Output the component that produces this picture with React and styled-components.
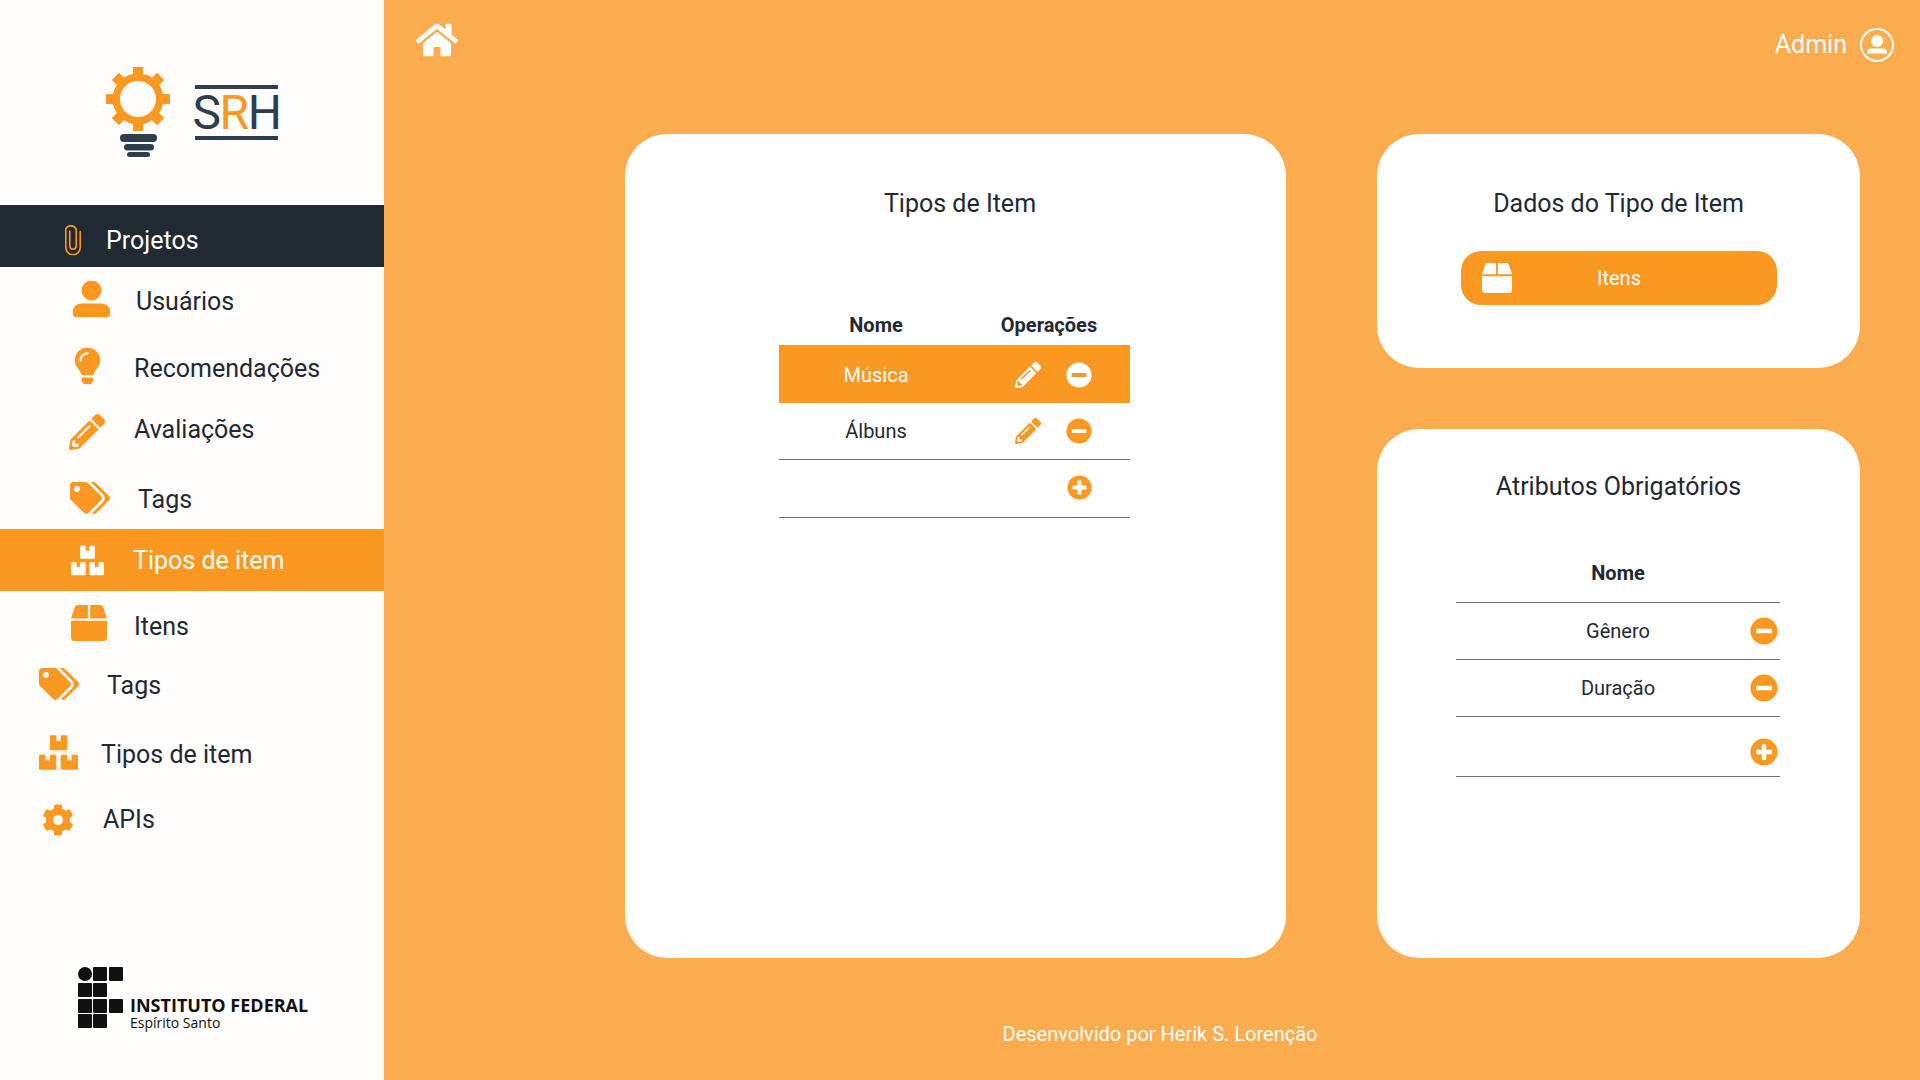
import React from "react";
import styled, { createGlobalStyle } from "styled-components";
import {
  FaBox,
  FaBoxes,
  FaCog,
  FaHome,
  FaLightbulb,
  FaMinusCircle,
  FaPencilAlt,
  FaPlusCircle,
  FaTags,
} from "react-icons/fa";

const ACCENT = "#fa9821";
const PAGE = "#fbac4e";
const DARK = "#212932";
const LOGO_DARK = "#2f3e4e";

const GlobalStyle = createGlobalStyle`
  html, body {
    margin: 0;
    padding: 0;
    height: 100%;
    overflow: hidden;
    font-family: Roboto, "Liberation Sans", sans-serif;
    color: ${DARK};
  }
  * { box-sizing: border-box; }
`;

const Page = styled.div`
  display: flex;
  width: 1920px;
  height: 1080px;
  background: ${PAGE};
`;

/* sidebar */
const Sidebar = styled.aside`
  display: flex;
  flex-direction: column;
  width: 384px;
  height: 100%;
  background: #fffdfb;
`;

const LogoArea = styled.div`
  display: flex;
  align-items: flex-start;
  height: 205px;
  padding: 67px 0 0 106px;
`;

const BulbMark = styled.svg`
  width: 64px;
  height: 90px;
  display: block;
`;

const Wordmark = styled.div`
  width: 83px;
  height: 55px;
  margin: 18px 0 0 25px;
  border-top: 4px solid ${LOGO_DARK};
  border-bottom: 4px solid ${LOGO_DARK};
  display: flex;
  align-items: center;
  justify-content: center;
  font-size: 48px;
  line-height: 47px;
  letter-spacing: -1.5px;
  color: ${LOGO_DARK};
  span {
    color: ${ACCENT};
  }
`;

const Nav = styled.nav`
  display: flex;
  flex-direction: column;
`;

const NavRow = styled.a`
  display: flex;
  align-items: center;
  height: ${(p) => p.$h}px;
  margin-top: ${(p) => p.$mt || 0}px;
  padding-left: ${(p) => p.$iconX}px;
  padding-top: ${(p) => p.$pt || 0}px;
  font-size: 25px;
  background: ${(p) =>
    p.$state === "open" ? DARK : p.$state === "active" ? ACCENT : "transparent"};
  color: ${(p) => (p.$state ? "#fff" : DARK)};
`;

const NavIcon = styled.span`
  display: flex;
  flex: none;
  width: ${(p) => p.$w}px;
  color: ${(p) => (p.$state === "active" ? "#fff" : ACCENT)};
  transform: translateY(${(p) => p.$dy || 0}px);
  svg {
    display: block;
  }
`;

const SidebarFooter = styled.div`
  display: flex;
  align-items: flex-end;
  margin-top: auto;
  padding: 0 0 52px 78px;
`;

const IfMark = styled.svg`
  width: 45px;
  height: 61px;
  display: block;
  flex: none;
`;

const IfText = styled.div`
  margin: 0 0 -3px 7px;
  font-family: "Open Sans", sans-serif;
  color: #111;
`;

const IfName = styled.div`
  font-size: 18px;
  line-height: 20px;
  font-weight: 700;
  white-space: nowrap;
`;

const IfPlace = styled.div`
  font-size: 14px;
  line-height: 16px;
  white-space: nowrap;
`;

/* main */
const Main = styled.main`
  display: flex;
  flex-direction: column;
  flex: 1;
  min-width: 0;
  color: #fff;
`;

const TopBar = styled.header`
  display: flex;
  justify-content: space-between;
  height: 134px;
  padding: 19px 26px 0 32px;
`;

const UserBox = styled.div`
  display: flex;
  align-items: flex-start;
  gap: 13px;
  padding-top: 9px;
  font-size: 25px;
  line-height: 34px;
`;

const Content = styled.div`
  display: flex;
  gap: 91px;
  height: 824px;
  padding-left: 241px;
`;

const Column = styled.div`
  display: flex;
  flex-direction: column;
  gap: 61px;
  width: 483px;
`;

const Card = styled.section`
  display: flex;
  flex-direction: column;
  width: ${(p) => p.$w || "100%"};
  height: ${(p) => (p.$h ? `${p.$h}px` : "auto")};
  flex: ${(p) => (p.$grow ? 1 : "none")};
  padding-top: ${(p) => p.$pt || 50}px;
  background: #fff;
  border-radius: 42px;
  color: ${DARK};
`;

const CardTitle = styled.h2`
  margin: 0;
  padding-left: ${(p) => p.$shift || 0}px;
  font-size: 25px;
  line-height: 40px;
  font-weight: 400;
  text-align: center;
`;

const TypeTable = styled.div`
  display: flex;
  flex-direction: column;
  width: 351px;
  margin: 81px 0 0 154px;
  font-size: 20px;
`;

const TypeRow = styled.div`
  display: grid;
  grid-template-columns: 194px 152px;
  align-items: center;
  height: ${(p) => p.$h}px;
  padding-top: ${(p) => p.$pt || 0}px;
  padding-bottom: ${(p) => p.$pb || 0}px;
  background: ${(p) => (p.$selected ? ACCENT : "transparent")};
  color: ${(p) => (p.$selected ? "#fff" : DARK)};
  border-bottom: ${(p) => (p.$line ? "1px solid #707070" : "none")};
`;

const HeadCell = styled.div`
  font-weight: 700;
  text-align: center;
  white-space: nowrap;
`;

const NameCell = styled.div`
  text-align: center;
`;

const Ops = styled.div`
  display: flex;
  align-items: center;
  justify-content: flex-end;
  gap: 25px;
  padding-right: 33px;
  color: ${(p) => (p.$selected ? "#fff" : ACCENT)};
`;

const ItemsButton = styled.button`
  position: relative;
  display: flex;
  align-items: center;
  justify-content: center;
  width: 316px;
  height: 54px;
  margin: 27px 0 0 84px;
  border: 0;
  border-radius: 20px;
  background: ${ACCENT};
  color: #fff;
  font-family: inherit;
  font-size: 20px;
  svg {
    position: absolute;
    left: 21px;
    top: 12px;
  }
`;

const AttrTable = styled.div`
  display: flex;
  flex-direction: column;
  width: 324px;
  margin: 40px 0 0 79px;
  font-size: 20px;
`;

const AttrRow = styled.div`
  display: grid;
  grid-template-columns: 1fr auto 1fr;
  align-items: center;
  height: ${(p) => p.$h}px;
  padding-top: ${(p) => p.$pt || 0}px;
  padding-bottom: ${(p) => p.$pb || 0}px;
  border-bottom: 1px solid #707070;
`;

const AttrLabel = styled.div`
  grid-column: 2;
  white-space: nowrap;
  font-weight: ${(p) => (p.$bold ? 700 : 400)};
`;

const AttrAction = styled.div`
  grid-column: 3;
  justify-self: end;
  padding-right: 2px;
  color: ${ACCENT};
  svg {
    display: block;
  }
`;

const Footer = styled.footer`
  display: flex;
  justify-content: center;
  padding: 60px 0 0 16px;
  font-size: 20px;
  line-height: 32px;
`;

/* drawings */
const PaperClip = () => (
  <svg width="16" height="33" viewBox="0 0 16 33" fill="none" stroke="currentColor" strokeWidth="1.6" strokeLinecap="round">
    <path d="M4.8 8.5V23.5a3.2 3.2 0 0 0 6.4 0V6.8a5.9 5.9 0 0 0-10.4-0.6V25a7.2 7.2 0 0 0 14.4 0V9" />
  </svg>
);

const UserGlyph = () => (
  <svg width="37" height="37" viewBox="0 0 37 37" fill="currentColor">
    <circle cx="18.5" cy="10" r="10" />
    <path d="M9 23h19a9 7 0 0 1 9 7v3a4 4 0 0 1-4 4H4a4 4 0 0 1-4-4v-3a9 7 0 0 1 9-7z" />
  </svg>
);

const UserRing = () => (
  <svg width="34" height="34" viewBox="0 0 34 34" fill="currentColor">
    <circle cx="17" cy="17" r="16" fill="none" stroke="currentColor" strokeWidth="2" />
    <circle cx="17" cy="13" r="6" />
    <path d="M11.5 20.5h11a4.5 3.5 0 0 1 4.5 3.5v1.5h-20v-1.5a4.5 3.5 0 0 1 4.5-3.5z" />
  </svg>
);

const GearBulb = () => (
  <BulbMark viewBox="0 0 64 90">
    <g fill={ACCENT}>
      <rect x="27" y="0" width="10" height="64" />
      <rect x="0" y="27" width="64" height="10" />
      <rect x="27" y="0" width="10" height="64" transform="rotate(45 32 32)" />
      <rect x="27" y="0" width="10" height="64" transform="rotate(-45 32 32)" />
    </g>
    <circle cx="32" cy="32" r="21.7" fill="#fffdfb" stroke={ACCENT} strokeWidth="7.4" />
    <rect x="14" y="67" width="37" height="8" rx="4" fill={LOGO_DARK} />
    <rect x="18" y="77" width="30" height="6.5" rx="3.2" fill={LOGO_DARK} />
    <rect x="21" y="85" width="23" height="5" rx="2.5" fill={LOGO_DARK} />
  </BulbMark>
);

const ifSquares = [
  [15, 0],
  [31, 0],
  [0, 16],
  [15, 16],
  [0, 32],
  [15, 32],
  [31, 32],
  [0, 47],
  [15, 47],
];

const InstituteMark = () => (
  <IfMark viewBox="0 0 45 61">
    <circle cx="7" cy="7" r="7" fill="#111" />
    {ifSquares.map(([x, y]) => (
      <rect key={`${x}-${y}`} x={x} y={y} width="14" height="14" rx="1" fill="#111" />
    ))}
  </IfMark>
);

const navItems = [
  { label: "Projetos", icon: <PaperClip />, state: "open", h: 62, pt: 8, iconX: 65, textX: 106, dy: -1.5 },
  { label: "Usuários", icon: <UserGlyph />, h: 68, iconX: 73, textX: 136, dy: -2.5 },
  { label: "Recomendações", icon: <FaLightbulb size={37} />, h: 66, iconX: 69, textX: 134, dy: -2.5 },
  { label: "Avaliações", icon: <FaPencilAlt size={36} />, h: 56, iconX: 69, textX: 134, dy: 3 },
  { label: "Tags", icon: <FaTags size={40} />, h: 60, mt: 12, iconX: 70, textX: 138, dy: -1 },
  { label: "Tipos de item", icon: <FaBoxes size={33} />, state: "active", h: 62, iconX: 71, textX: 133 },
  { label: "Itens", icon: <FaBox size={36} />, h: 70, iconX: 71, textX: 134, dy: -3 },
  { label: "Tags", icon: <FaTags size={40} />, h: 48, iconX: 39, textX: 107, dy: -1 },
  { label: "Tipos de item", icon: <FaBoxes size={39} />, h: 90, iconX: 39, textX: 101, dy: -2 },
  { label: "APIs", icon: <FaCog size={32} />, h: 40, iconX: 42, textX: 103, dy: 1 },
];

const typeRows = [
  { name: "Música", selected: true, h: 58, pt: 2 },
  { name: "Álbuns", h: 57, line: true },
];

export default function App() {
  return (
    <Page>
      <GlobalStyle />
      <Sidebar>
        <LogoArea>
          <GearBulb />
          <Wordmark>
            S<span>R</span>H
          </Wordmark>
        </LogoArea>
        <Nav>
          {navItems.map((item) => (
            <NavRow
              key={`${item.label}-${item.iconX}`}
              $h={item.h}
              $mt={item.mt}
              $pt={item.pt}
              $iconX={item.iconX}
              $state={item.state}
            >
              <NavIcon $w={item.textX - item.iconX} $dy={item.dy} $state={item.state}>
                {item.icon}
              </NavIcon>
              {item.label}
            </NavRow>
          ))}
        </Nav>
        <SidebarFooter>
          <InstituteMark />
          <IfText>
            <IfName>INSTITUTO FEDERAL</IfName>
            <IfPlace>Espírito Santo</IfPlace>
          </IfText>
        </SidebarFooter>
      </Sidebar>

      <Main>
        <TopBar>
          <FaHome size={42} />
          <UserBox>
            Admin
            <UserRing />
          </UserBox>
        </TopBar>

        <Content>
          <Card $w="661px">
            <CardTitle $shift={9}>Tipos de Item</CardTitle>
            <TypeTable>
              <TypeRow $h={40}>
                <HeadCell>Nome</HeadCell>
                <HeadCell>Operações</HeadCell>
              </TypeRow>
              {typeRows.map((row) => (
                <TypeRow key={row.name} $h={row.h} $pt={row.pt} $selected={row.selected} $line={row.line}>
                  <NameCell>{row.name}</NameCell>
                  <Ops $selected={row.selected}>
                    <FaPencilAlt size={26} />
                    <FaMinusCircle size={26} />
                  </Ops>
                </TypeRow>
              ))}
              <TypeRow $h={58} $pb={3} $line>
                <span />
                <Ops>
                  <FaPlusCircle size={25} />
                </Ops>
              </TypeRow>
            </TypeTable>
          </Card>

          <Column>
            <Card $h={234}>
              <CardTitle>Dados do Tipo de Item</CardTitle>
              <ItemsButton>
                <FaBox size={30} />
                Itens
              </ItemsButton>
            </Card>
            <Card $grow $pt={38}>
              <CardTitle>Atributos Obrigatórios</CardTitle>
              <AttrTable>
                <AttrRow $h={56} $pb={3}>
                  <AttrLabel $bold>Nome</AttrLabel>
                </AttrRow>
                <AttrRow $h={57}>
                  <AttrLabel>Gênero</AttrLabel>
                  <AttrAction>
                    <FaMinusCircle size={28} />
                  </AttrAction>
                </AttrRow>
                <AttrRow $h={57}>
                  <AttrLabel>Duração</AttrLabel>
                  <AttrAction>
                    <FaMinusCircle size={28} />
                  </AttrAction>
                </AttrRow>
                <AttrRow $h={60} $pt={10}>
                  <AttrAction>
                    <FaPlusCircle size={28} />
                  </AttrAction>
                </AttrRow>
              </AttrTable>
            </Card>
          </Column>
        </Content>

        <Footer>Desenvolvido por Herik S. Lorenção</Footer>
      </Main>
    </Page>
  );
}
